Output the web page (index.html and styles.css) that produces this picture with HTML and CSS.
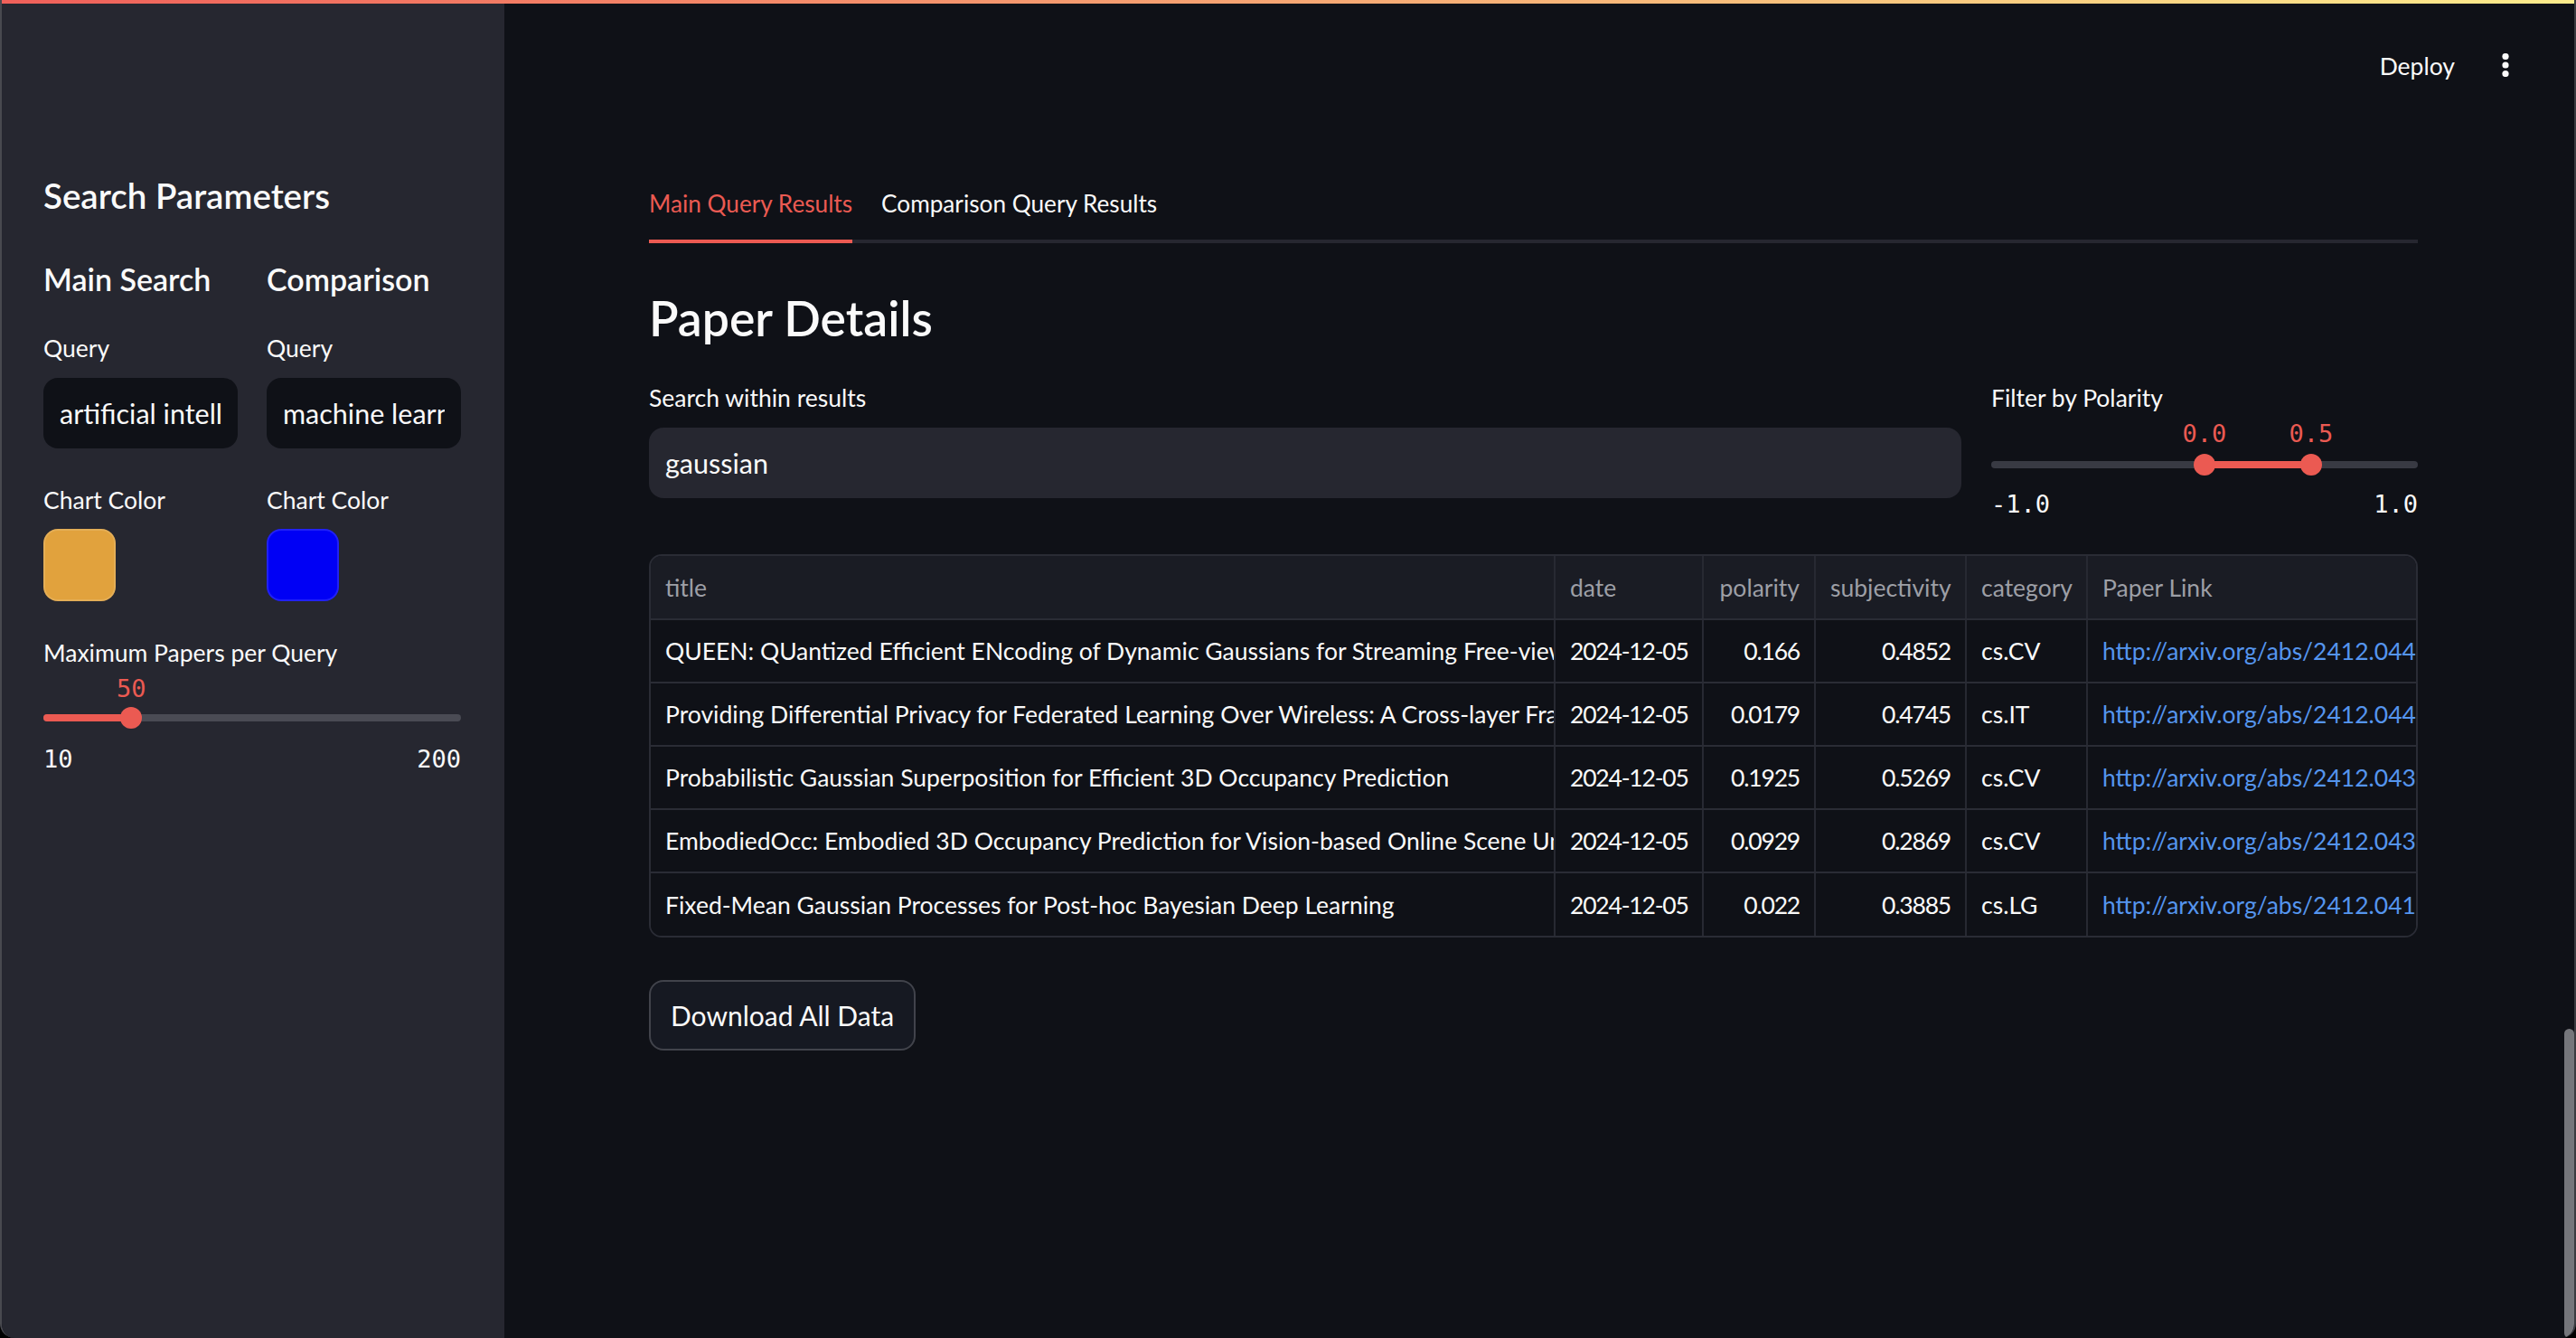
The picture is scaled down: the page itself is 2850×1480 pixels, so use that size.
FILE: index.html
```html
<!DOCTYPE html>
<html lang="en">
<head>
<meta charset="utf-8">
<title>Paper Details</title>
<link rel="stylesheet" href="styles.css">
</head>
<body>
<div class="app">
  <div class="decoration"></div>

  <aside class="sidebar">
    <h2 class="side-title">Search Parameters</h2>
    <div class="side-cols">
      <div class="side-col">
        <h3 class="col-title">Main Search</h3>
        <div class="lbl">Query</div>
        <div class="input input-dark"><span class="input-text">artificial intelligence</span></div>
        <div class="lbl lbl-gap">Chart Color</div>
        <div class="swatch swatch-orange"></div>
      </div>
      <div class="side-col">
        <h3 class="col-title">Comparison</h3>
        <div class="lbl">Query</div>
        <div class="input input-dark"><span class="input-text">machine learning</span></div>
        <div class="lbl lbl-gap">Chart Color</div>
        <div class="swatch swatch-blue"></div>
      </div>
    </div>
    <div class="lbl lbl-gap">Maximum Papers per Query</div>
    <div class="slider slider-side">
      <div class="slider-values"><span class="sv" style="left:21.05%">50</span></div>
      <div class="track"><div class="fill" style="left:0;width:21.05%"></div><span class="thumb" style="left:21.05%"></span></div>
      <div class="ticks"><span>10</span><span>200</span></div>
    </div>
  </aside>

  <main class="main">
    <header class="topbar">
      <span class="deploy">Deploy</span>
      <svg class="kebab" width="8" height="26" viewBox="0 0 8 26"><circle cx="4" cy="3.5" r="3.6" fill="#fafafa"/><circle cx="4" cy="13" r="3.6" fill="#fafafa"/><circle cx="4" cy="22.5" r="3.6" fill="#fafafa"/></svg>
    </header>

    <div class="block">
      <nav class="tabs">
        <span class="tab tab-active">Main Query Results</span>
        <span class="tab">Comparison Query Results</span>
      </nav>

      <h3 class="page-title">Paper Details</h3>

      <div class="filters">
        <div class="filter-col">
          <div class="lbl">Search within results</div>
          <div class="input input-light"><span class="input-text">gaussian</span></div>
        </div>
        <div class="filter-col">
          <div class="lbl">Filter by Polarity</div>
          <div class="slider slider-main">
            <div class="slider-values"><span class="sv" style="left:50%">0.0</span><span class="sv" style="left:75%">0.5</span></div>
            <div class="track"><div class="fill" style="left:50%;width:25%"></div><span class="thumb" style="left:50%"></span><span class="thumb" style="left:75%"></span></div>
            <div class="ticks"><span>-1.0</span><span>1.0</span></div>
          </div>
        </div>
      </div>

      <div class="grid-wrap">
        <table class="grid">
          <colgroup>
            <col class="c-title"><col class="c-date"><col class="c-pol"><col class="c-subj"><col class="c-cat"><col class="c-link">
          </colgroup>
          <thead>
            <tr><th>title</th><th>date</th><th class="num">polarity</th><th class="num">subjectivity</th><th>category</th><th>Paper Link</th></tr>
          </thead>
          <tbody>
            <tr><td>QUEEN: QUantized Efficient ENcoding of Dynamic Gaussians for Streaming Free-viewpoint Videos</td><td class="fig">2024-12-05</td><td class="num fig">0.166</td><td class="num fig">0.4852</td><td>cs.CV</td><td class="link">http://arxiv.org/abs/2412.04469v1</td></tr>
            <tr><td>Providing Differential Privacy for Federated Learning Over Wireless: A Cross-layer Framework</td><td class="fig">2024-12-05</td><td class="num fig">0.0179</td><td class="num fig">0.4745</td><td>cs.IT</td><td class="link">http://arxiv.org/abs/2412.04408v1</td></tr>
            <tr><td>Probabilistic Gaussian Superposition for Efficient 3D Occupancy Prediction</td><td class="fig">2024-12-05</td><td class="num fig">0.1925</td><td class="num fig">0.5269</td><td>cs.CV</td><td class="link">http://arxiv.org/abs/2412.04384v1</td></tr>
            <tr><td>EmbodiedOcc: Embodied 3D Occupancy Prediction for Vision-based Online Scene Understanding</td><td class="fig">2024-12-05</td><td class="num fig">0.0929</td><td class="num fig">0.2869</td><td>cs.CV</td><td class="link">http://arxiv.org/abs/2412.04380v1</td></tr>
            <tr><td>Fixed-Mean Gaussian Processes for Post-hoc Bayesian Deep Learning</td><td class="fig">2024-12-05</td><td class="num fig">0.022</td><td class="num fig">0.3885</td><td>cs.LG</td><td class="link">http://arxiv.org/abs/2412.04177v1</td></tr>
          </tbody>
        </table>
      </div>

      <button class="btn">Download All Data</button>
    </div>

    <div class="scrollbar"></div>
  </main>
</div>
</body>
</html>
```

FILE: styles.css
```css
html, body {
  margin: 0;
  padding: 0;
  background: #000;
}

body {
  font-family: Lato, "Noto Sans", sans-serif;
  color: #fafafa;
}

.app {
  position: relative;
  width: 2850px;
  height: 1480px;
  box-sizing: border-box;
  display: flex;
  overflow: hidden;
  border-radius: 0 0 16px 16px;
  border-left: 2px solid #48494f;
  border-right: 2px solid #3a3b40;
  background: #0f1117;
}

.decoration {
  position: absolute;
  top: 0;
  left: 0;
  right: 0;
  height: 4px;
  background: linear-gradient(90deg, #f0605a, #fdec8c);
  z-index: 5;
}

/* ---------- Sidebar ---------- */
.sidebar {
  width: 556px;
  flex: none;
  box-sizing: border-box;
  background: #262730;
  padding: 188px 48px 0 46px;
}

.side-title {
  margin: 0;
  font-size: 38.5px;
  line-height: 56px;
  font-weight: 600;
}

.side-cols {
  display: grid;
  grid-template-columns: minmax(0, 1fr) minmax(0, 1fr);
  column-gap: 32px;
  margin-top: 37px;
}

.side-col {
  min-width: 0;
}

.col-title {
  margin: 0;
  font-size: 34px;
  line-height: 56px;
  font-weight: 600;
  white-space: nowrap;
}

.lbl {
  font-size: 26.5px;
  line-height: 40px;
  margin-top: 28px;
}

.lbl-gap,
.side-col .lbl-gap {
  margin-top: 37px;
}

.input {
  margin-top: 13px;
  height: 78px;
  border-radius: 16px;
  box-sizing: border-box;
  padding: 0 18px;
  display: flex;
  align-items: center;
  font-size: 30.5px;
  min-width: 0;
}

.input-text {
  display: block;
  width: 100%;
  overflow: hidden;
  white-space: nowrap;
}

.input-dark {
  background: #0f1117;
}

.input-light {
  background: #262730;
}

.swatch {
  margin-top: 12px;
  width: 80px;
  height: 80px;
  border-radius: 16px;
  box-sizing: border-box;
  box-shadow: inset 0 0 0 2px rgba(255, 255, 255, 0.13);
}

.swatch-orange {
  background: #e1a23d;
}

.swatch-blue {
  background: #0000f5;
}

/* ---------- Sliders ---------- */
.slider {
  font-family: "DejaVu Sans Mono", "Liberation Mono", monospace;
  font-size: 27px;
}

.slider-values {
  position: relative;
  height: 40px;
}

.sv {
  position: absolute;
  top: 0;
  line-height: 40px;
  color: #eb5a52;
  transform: translateX(-50%);
}

.track {
  position: relative;
  height: 8px;
  margin: 8px 0 0;
  border-radius: 4px;
}

.slider-side .track {
  background: #4a4b54;
}

.slider-main .track {
  background: #383a43;
  margin-top: 10px;
}

.fill {
  position: absolute;
  top: 0;
  bottom: 0;
  background: #eb5a52;
  border-radius: 4px;
}

.thumb {
  position: absolute;
  top: 50%;
  width: 24px;
  height: 24px;
  border-radius: 50%;
  background: #eb5a52;
  transform: translate(-50%, -50%);
}

.ticks {
  display: flex;
  justify-content: space-between;
  line-height: 40px;
  margin-top: 22px;
}

.slider-main .ticks {
  margin-top: 20px;
}

/* ---------- Main ---------- */
.main {
  position: relative;
  flex: 1;
  min-width: 0;
  background: #0f1117;
}

.topbar {
  height: 146px;
  display: flex;
  align-items: center;
  justify-content: flex-end;
  gap: 52px;
  padding-right: 72px;
}

.deploy {
  font-size: 26.5px;
  line-height: 40px;
}

.kebab {
  display: block;
  margin-top: -2px;
}

.block {
  padding: 0 173px 0 160px;
}

.tabs {
  margin-top: 59px;
  display: flex;
  gap: 32px;
  border-bottom: 4px solid #262730;
}

.tab {
  font-size: 26.2px;
  line-height: 40px;
  padding-bottom: 20px;
  margin-bottom: -4px;
  border-bottom: 4px solid transparent;
}

.tab-active {
  color: #eb5a52;
  border-bottom-color: #eb5a52;
}

.page-title {
  margin: 46px 0 0;
  font-size: 53.5px;
  line-height: 72px;
  font-weight: 600;
}

.filters {
  margin-top: 33px;
  display: grid;
  grid-template-columns: 1452px minmax(0, 1fr);
  column-gap: 33px;
}

.filters .lbl {
  margin-top: 0;
}

/* ---------- Table ---------- */
.grid-wrap {
  margin-top: 35px;
  border: 2px solid #2a2c35;
  border-radius: 14px;
  overflow: hidden;
}

.grid {
  width: 100%;
  table-layout: fixed;
  border-collapse: collapse;
  font-size: 26.5px;
}

.c-title { width: 1000px; }
.c-date { width: 164px; }
.c-pol { width: 124px; }
.c-subj { width: 167px; }
.c-cat { width: 134px; }
.c-link { width: auto; }

.grid th,
.grid td {
  height: 70px;
  padding: 0 16px;
  box-sizing: border-box;
  white-space: nowrap;
  overflow: hidden;
  text-align: left;
  border-right: 2px solid #272932;
  border-bottom: 2px solid #2a2c35;
}

.grid th {
  background: #1a1c24;
  color: #9d9fa6;
  font-weight: 400;
}

.grid td {
  color: #fafafa;
  background: #0f1117;
}

.grid .fig {
  letter-spacing: -1.2px;
}

.grid tr > :last-child {
  border-right: none;
  padding-right: 0;
}

.grid tbody tr:last-child td {
  border-bottom: none;
}

.grid .num {
  text-align: right;
}

.grid .link {
  color: #5595ee;
  text-overflow: clip;
}

.btn {
  display: block;
  margin-top: 47px;
  height: 78px;
  padding: 0 22px;
  border: 2px solid #41434b;
  border-radius: 16px;
  background: #161922;
  color: #fafafa;
  font-family: Lato, "Noto Sans", sans-serif;
  font-size: 30px;
}

.scrollbar {
  position: absolute;
  right: 0;
  top: 1138px;
  bottom: 0;
  width: 11px;
  border-radius: 6px 6px 0 6px;
  background: #75767b;
}
```
